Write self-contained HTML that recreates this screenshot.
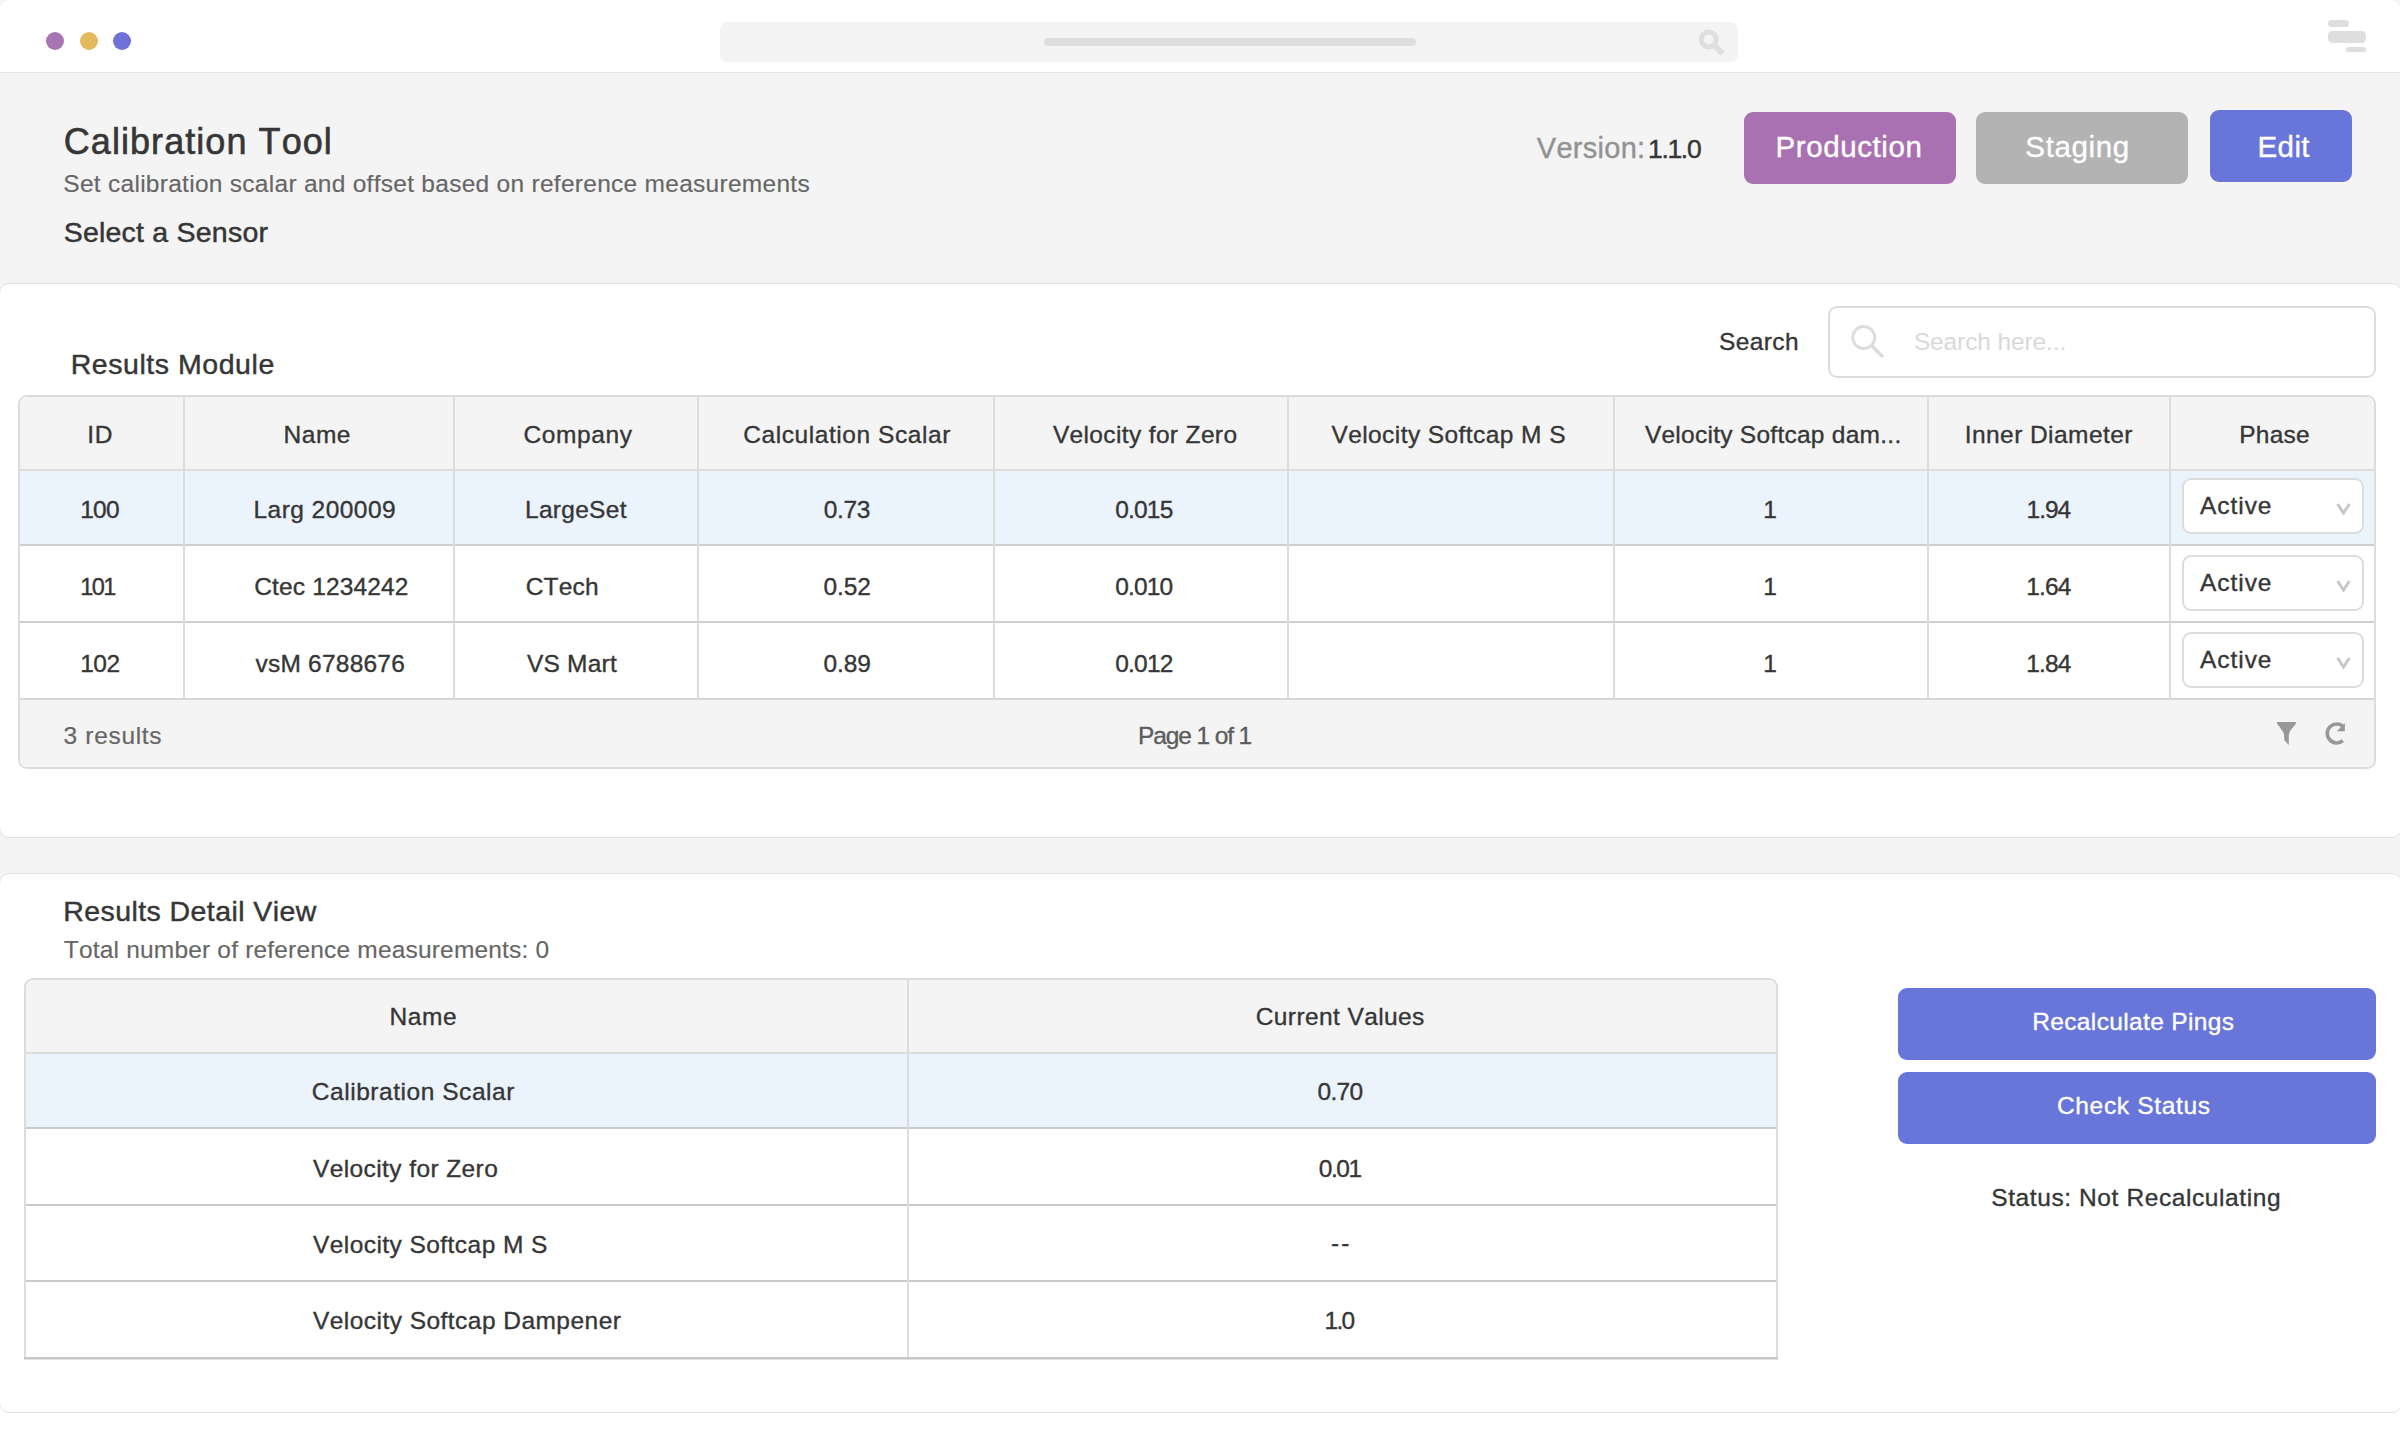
<!DOCTYPE html>
<html><head><meta charset="utf-8"><title>Calibration Tool</title>
<style>
html,body{margin:0;padding:0;}
body{width:2400px;height:1440px;position:relative;overflow:hidden;background:#fff;font-family:"Liberation Sans",sans-serif;font-kerning:none;}
.t{position:absolute;white-space:nowrap;line-height:1;-webkit-text-stroke:0.35px currentColor;}
.r{position:absolute;box-sizing:border-box;}
</style></head><body>
<div class="r" style="left:0px;top:0px;width:2400px;height:878px;background:#f4f4f4;"></div>
<div class="r" style="left:0px;top:0px;width:2400px;height:73px;background:#e6e6e6;border-radius:9px 9px 0 0;"></div>
<div class="r" style="left:0px;top:0px;width:2400px;height:71.5px;background:#fff;border-radius:9px 9px 0 0;"></div>
<div class="r" style="left:46px;top:32px;width:18px;height:18px;background:#a974b4;border-radius:50%;"></div>
<div class="r" style="left:79.5px;top:32px;width:18.0px;height:18px;background:#e3b95e;border-radius:50%;"></div>
<div class="r" style="left:113px;top:32px;width:18px;height:18px;background:#6f72d6;border-radius:50%;"></div>
<div class="r" style="left:720px;top:22px;width:1018px;height:40px;background:#f4f4f4;border-radius:7px;"></div>
<div class="r" style="left:1044px;top:37.5px;width:372px;height:8.0px;background:#dedede;border-radius:4px;"></div>
<svg class="r" style="left:1690px;top:20px" width="40" height="40" viewBox="0 0 40 40"><circle cx="18.75" cy="19.5" r="7.5" fill="none" stroke="#dedede" stroke-width="5"/><path d="M24 25 L32.5 33.5" stroke="#dedede" stroke-width="6"/></svg>
<div class="r" style="left:2328px;top:20px;width:21px;height:7px;background:#dedede;border-radius:3.5px;"></div>
<div class="r" style="left:2328px;top:31px;width:38px;height:12px;background:#dedede;border-radius:4.5px;"></div>
<div class="r" style="left:2346px;top:46.5px;width:20px;height:5.5px;background:#dedede;border-radius:2.75px;"></div>
<div class="t" style="left:63.77px;top:124.22px;font-size:36px;color:#363636;letter-spacing:1.061px;-webkit-text-stroke-width:0.6px;">Calibration Tool</div>
<div class="t" style="left:63.29px;top:171.86px;font-size:24.5px;color:#666;letter-spacing:0.278px;-webkit-text-stroke-width:0.15px;">Set calibration scalar and offset based on reference measurements</div>
<div class="t" style="left:63.71px;top:218.47px;font-size:28.5px;color:#363636;letter-spacing:0.219px;-webkit-text-stroke-width:0.5px;">Select a Sensor</div>
<div class="t" style="left:1536.87px;top:133.95px;font-size:29px;color:#929292;letter-spacing:0.270px;">Version:</div>
<div class="t" style="left:1647.98px;top:136.06px;font-size:26.5px;color:#363636;letter-spacing:-1.321px;-webkit-text-stroke-width:0.45px;">1.1.0</div>
<div class="r" style="left:1744px;top:112px;width:212px;height:72px;background:#aa71b2;border-radius:9px;"></div>
<div class="t" style="left:1775.58px;top:132.02px;font-size:29.5px;color:#fff;letter-spacing:0.589px;">Production</div>
<div class="r" style="left:1976px;top:112px;width:212px;height:72px;background:#b3b3b3;border-radius:9px;"></div>
<div class="t" style="left:2025.36px;top:132.02px;font-size:29.5px;color:#fff;letter-spacing:0.631px;">Staging</div>
<div class="r" style="left:2210px;top:110px;width:142px;height:72px;background:#6875d9;border-radius:9px;"></div>
<div class="t" style="left:2257.58px;top:132.02px;font-size:29.5px;color:#fff;letter-spacing:0.368px;">Edit</div>
<div class="r" style="left:-1.5px;top:282.5px;width:2403.0px;height:555.0px;background:#fff;border:1.5px solid #e0e0e0;border-radius:10px;box-sizing:border-box;"></div>
<div class="t" style="left:70.66px;top:350.32px;font-size:28.5px;color:#363636;letter-spacing:0.552px;-webkit-text-stroke-width:0.45px;">Results Module</div>
<div class="t" style="left:1718.89px;top:329.96px;font-size:24.5px;color:#363636;letter-spacing:0.415px;">Search</div>
<div class="r" style="left:1828px;top:306px;width:548px;height:72px;background:#fff;border:2px solid #dcdcdc;border-radius:9px;box-sizing:border-box;"></div>
<svg class="r" style="left:1840px;top:315px" width="50" height="50" viewBox="0 0 50 50"><circle cx="23.75" cy="22.5" r="11" fill="none" stroke="#dcdcdc" stroke-width="3"/><path d="M31.5 30.5 L43 42" stroke="#dcdcdc" stroke-width="3.2"/></svg>
<div class="t" style="left:1913.89px;top:329.96px;font-size:24.5px;color:#d9d9d9;letter-spacing:-0.119px;-webkit-text-stroke-width:0px;">Search here...</div>
<div class="r" style="left:18px;top:395px;width:2358px;height:374px;background:#fff;border:2px solid #dcdcdc;border-radius:9px;box-sizing:border-box;overflow:hidden;"></div>
<div class="r" style="left:20px;top:397px;width:2354px;height:72px;background:#f4f4f4;border-radius:7px 7px 0 0;"></div>
<div class="r" style="left:20px;top:469px;width:2354px;height:2px;background:#dcdcdc;"></div>
<div class="r" style="left:20px;top:471px;width:2354px;height:73px;background:#ebf3fd;"></div>
<div class="r" style="left:20px;top:544px;width:2354px;height:2px;background:#cecece;"></div>
<div class="r" style="left:20px;top:621px;width:2354px;height:2px;background:#cecece;"></div>
<div class="r" style="left:20px;top:698px;width:2354px;height:2px;background:#d6d6d6;"></div>
<div class="r" style="left:20px;top:700px;width:2354px;height:67px;background:#f4f4f4;border-radius:0 0 7px 7px;"></div>
<div class="r" style="left:183px;top:397px;width:2px;height:301px;background:#dcdcdc;"></div>
<div class="r" style="left:453px;top:397px;width:2px;height:301px;background:#dcdcdc;"></div>
<div class="r" style="left:697px;top:397px;width:2px;height:301px;background:#dcdcdc;"></div>
<div class="r" style="left:993px;top:397px;width:2px;height:301px;background:#dcdcdc;"></div>
<div class="r" style="left:1287px;top:397px;width:2px;height:301px;background:#dcdcdc;"></div>
<div class="r" style="left:1613px;top:397px;width:2px;height:301px;background:#dcdcdc;"></div>
<div class="r" style="left:1927px;top:397px;width:2px;height:301px;background:#dcdcdc;"></div>
<div class="r" style="left:2169px;top:397px;width:2px;height:301px;background:#dcdcdc;"></div>
<div class="t" style="left:87.34px;top:422.96px;font-size:24.5px;color:#363636;letter-spacing:0.583px;">ID</div>
<div class="t" style="left:283.49px;top:422.96px;font-size:24.5px;color:#363636;letter-spacing:0.548px;">Name</div>
<div class="t" style="left:523.46px;top:422.96px;font-size:24.5px;color:#363636;letter-spacing:0.623px;">Company</div>
<div class="t" style="left:743.26px;top:422.96px;font-size:24.5px;color:#363636;letter-spacing:0.570px;">Calculation Scalar</div>
<div class="t" style="left:1052.89px;top:422.96px;font-size:24.5px;color:#363636;letter-spacing:0.361px;">Velocity for Zero</div>
<div class="t" style="left:1331.39px;top:422.96px;font-size:24.5px;color:#363636;letter-spacing:0.426px;">Velocity Softcap M S</div>
<div class="t" style="left:1644.89px;top:422.96px;font-size:24.5px;color:#363636;letter-spacing:0.263px;">Velocity Softcap dam...</div>
<div class="t" style="left:1964.74px;top:422.96px;font-size:24.5px;color:#363636;letter-spacing:0.433px;">Inner Diameter</div>
<div class="t" style="left:2239.29px;top:422.96px;font-size:24.5px;color:#363636;letter-spacing:0.207px;">Phase</div>
<div class="t" style="left:80.13px;top:498.36px;font-size:24.5px;color:#363636;letter-spacing:-0.677px;">100</div>
<div class="t" style="left:253.49px;top:498.36px;font-size:24.5px;color:#363636;letter-spacing:0.457px;">Larg 200009</div>
<div class="t" style="left:524.99px;top:498.36px;font-size:24.5px;color:#363636;letter-spacing:0.293px;">LargeSet</div>
<div class="t" style="left:823.84px;top:498.36px;font-size:24.5px;color:#363636;letter-spacing:-0.417px;">0.73</div>
<div class="t" style="left:1115.19px;top:498.36px;font-size:24.5px;color:#363636;letter-spacing:-0.806px;">0.015</div>
<div class="t" style="left:1763.15px;top:498.36px;font-size:24.5px;color:#363636;">1</div>
<div class="t" style="left:2026.58px;top:498.36px;font-size:24.5px;color:#363636;letter-spacing:-1.067px;">1.94</div>
<div class="r" style="left:2182px;top:478px;width:182px;height:56px;background:#fff;border:2px solid #dcdcdc;border-radius:9px;box-sizing:border-box;"></div>
<div class="t" style="left:2199.95px;top:493.86px;font-size:24.5px;color:#363636;letter-spacing:0.964px;">Active</div>
<svg class="r" style="left:2334px;top:500px" width="20" height="20" viewBox="0 0 20 20"><path d="M3.6 4 L9.5 13 L15.4 4" fill="none" stroke="#c8c8c8" stroke-width="3"/></svg>
<div class="t" style="left:80.21px;top:575.70px;font-size:23.5px;color:#363636;letter-spacing:-1.486px;">101</div>
<div class="t" style="left:254.26px;top:574.86px;font-size:24.5px;color:#363636;letter-spacing:0.147px;">Ctec 1234242</div>
<div class="t" style="left:525.76px;top:574.86px;font-size:24.5px;color:#363636;letter-spacing:0.169px;">CTech</div>
<div class="t" style="left:823.44px;top:574.86px;font-size:24.5px;color:#363636;letter-spacing:-0.098px;">0.52</div>
<div class="t" style="left:1115.19px;top:574.86px;font-size:24.5px;color:#363636;letter-spacing:-0.824px;">0.010</div>
<div class="t" style="left:1763.15px;top:574.86px;font-size:24.5px;color:#363636;">1</div>
<div class="t" style="left:2026.33px;top:574.86px;font-size:24.5px;color:#363636;letter-spacing:-0.900px;">1.64</div>
<div class="r" style="left:2182px;top:555px;width:182px;height:56px;background:#fff;border:2px solid #dcdcdc;border-radius:9px;box-sizing:border-box;"></div>
<div class="t" style="left:2199.95px;top:570.86px;font-size:24.5px;color:#363636;letter-spacing:0.964px;">Active</div>
<svg class="r" style="left:2334px;top:577px" width="20" height="20" viewBox="0 0 20 20"><path d="M3.6 4 L9.5 13 L15.4 4" fill="none" stroke="#c8c8c8" stroke-width="3"/></svg>
<div class="t" style="left:80.13px;top:651.96px;font-size:24.5px;color:#363636;letter-spacing:-0.389px;">102</div>
<div class="t" style="left:255.42px;top:651.96px;font-size:24.5px;color:#363636;letter-spacing:0.236px;">vsM 6788676</div>
<div class="t" style="left:526.89px;top:651.96px;font-size:24.5px;color:#363636;letter-spacing:0.233px;">VS Mart</div>
<div class="t" style="left:823.39px;top:651.96px;font-size:24.5px;color:#363636;letter-spacing:-0.089px;">0.89</div>
<div class="t" style="left:1115.19px;top:651.96px;font-size:24.5px;color:#363636;letter-spacing:-0.755px;">0.012</div>
<div class="t" style="left:1763.15px;top:651.96px;font-size:24.5px;color:#363636;">1</div>
<div class="t" style="left:2026.33px;top:651.96px;font-size:24.5px;color:#363636;letter-spacing:-0.900px;">1.84</div>
<div class="r" style="left:2182px;top:632px;width:182px;height:56px;background:#fff;border:2px solid #dcdcdc;border-radius:9px;box-sizing:border-box;"></div>
<div class="t" style="left:2199.95px;top:647.86px;font-size:24.5px;color:#363636;letter-spacing:0.964px;">Active</div>
<svg class="r" style="left:2334px;top:654px" width="20" height="20" viewBox="0 0 20 20"><path d="M3.6 4 L9.5 13 L15.4 4" fill="none" stroke="#c8c8c8" stroke-width="3"/></svg>
<div class="t" style="left:63.47px;top:723.96px;font-size:24.5px;color:#666;letter-spacing:0.691px;-webkit-text-stroke-width:0.2px;">3 results</div>
<div class="t" style="left:1137.99px;top:723.96px;font-size:24.5px;color:#5c5c5c;letter-spacing:-1.112px;">Page 1 of 1</div>
<svg class="r" style="left:2270px;top:715px" width="80" height="40" viewBox="0 0 80 40"><path d="M7 7 L26 7 L26 8.5 L20 16 Q18.8 18 18.8 22 L18.8 30 L14.2 25 L14.2 22 Q14.2 18 12.5 16 L7 8.5 Z" fill="#979998"/><path d="M72.9 25.68 A9.5 9.5 0 1 1 73.5 11.7" fill="none" stroke="#979998" stroke-width="3.5"/><path d="M74.8 7.9 L74.8 16.2 L66.9 16.2 Z" fill="#979998"/></svg>
<div class="r" style="left:-1.5px;top:872.5px;width:2403.0px;height:540.5px;background:#fff;border:1.5px solid #e0e0e0;border-radius:10px;box-sizing:border-box;"></div>
<div class="t" style="left:63.26px;top:896.57px;font-size:28.5px;color:#363636;letter-spacing:0.420px;-webkit-text-stroke-width:0.45px;">Results Detail View</div>
<div class="t" style="left:63.85px;top:938.06px;font-size:24.5px;color:#666;letter-spacing:0.183px;-webkit-text-stroke-width:0.15px;">Total number of reference measurements: 0</div>
<div class="r" style="left:24px;top:978px;width:1754px;height:382px;background:#fff;border:2px solid #dcdcdc;border-bottom:none;border-radius:9px 9px 0 0;box-sizing:border-box;"></div>
<div class="r" style="left:26px;top:980px;width:1750px;height:72px;background:#f4f4f4;border-radius:7px 7px 0 0;"></div>
<div class="r" style="left:26px;top:1052px;width:1750px;height:2px;background:#dcdcdc;"></div>
<div class="r" style="left:26px;top:1054px;width:1750px;height:73px;background:#ebf3fd;"></div>
<div class="r" style="left:26px;top:1127px;width:1750px;height:2px;background:#cacaca;"></div>
<div class="r" style="left:26px;top:1204px;width:1750px;height:2px;background:#cacaca;"></div>
<div class="r" style="left:26px;top:1280px;width:1750px;height:2px;background:#cacaca;"></div>
<div class="r" style="left:24px;top:1357px;width:1754px;height:2px;background:#c8c8c8;"></div>
<div class="r" style="left:24px;top:1359px;width:1754px;height:1px;background:#e0e0e0;"></div>
<div class="r" style="left:907px;top:980px;width:2px;height:377px;background:#dcdcdc;"></div>
<div class="t" style="left:389.44px;top:1005.36px;font-size:24.5px;color:#363636;letter-spacing:0.615px;">Name</div>
<div class="t" style="left:1255.76px;top:1004.96px;font-size:24.5px;color:#363636;letter-spacing:0.394px;">Current Values</div>
<div class="t" style="left:311.76px;top:1080.06px;font-size:24.5px;color:#363636;letter-spacing:0.546px;">Calibration Scalar</div>
<div class="t" style="left:1317.39px;top:1080.06px;font-size:24.5px;color:#363636;letter-spacing:-0.623px;">0.70</div>
<div class="t" style="left:312.89px;top:1156.96px;font-size:24.5px;color:#363636;letter-spacing:0.411px;">Velocity for Zero</div>
<div class="t" style="left:1318.72px;top:1156.96px;font-size:24.5px;color:#363636;letter-spacing:-1.427px;">0.01</div>
<div class="t" style="left:312.89px;top:1232.96px;font-size:24.5px;color:#363636;letter-spacing:0.447px;">Velocity Softcap M S</div>
<div class="t" style="left:1331.09px;top:1230.96px;font-size:24.5px;color:#363636;letter-spacing:2.110px;">--</div>
<div class="t" style="left:312.89px;top:1308.71px;font-size:24.5px;color:#363636;letter-spacing:0.464px;">Velocity Softcap Dampener</div>
<div class="t" style="left:1324.56px;top:1308.71px;font-size:24.5px;color:#363636;letter-spacing:-1.743px;">1.0</div>
<div class="r" style="left:1898px;top:988px;width:478px;height:72px;background:#6875d9;border-radius:9px;"></div>
<div class="r" style="left:1898px;top:1072px;width:478px;height:72px;background:#6875d9;border-radius:9px;"></div>
<div class="t" style="left:2032.19px;top:1009.96px;font-size:24.5px;color:#fff;letter-spacing:0.362px;">Recalculate Pings</div>
<div class="t" style="left:2056.96px;top:1094.16px;font-size:24.5px;color:#fff;letter-spacing:0.675px;">Check Status</div>
<div class="t" style="left:1991.29px;top:1186.16px;font-size:24.5px;color:#363636;letter-spacing:0.592px;">Status: Not Recalculating</div>
</body></html>
